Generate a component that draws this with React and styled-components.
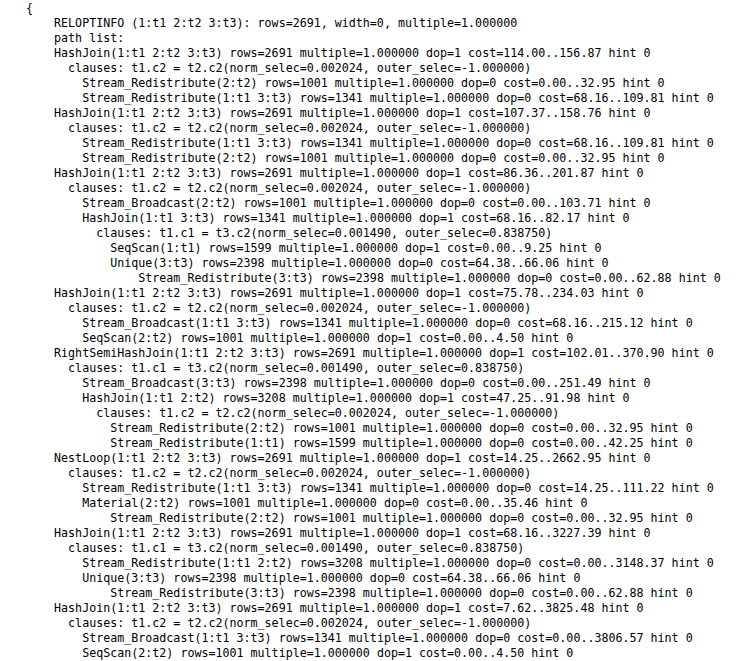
import React from "react";
import styled, { createGlobalStyle } from "styled-components";

const Global = createGlobalStyle`
  html, body {
    margin: 0;
    padding: 0;
    background: #ffffff;
  }
  body {
    width: 744px;
    height: 661px;
    overflow: hidden;
  }
`;

const Page = styled.main`
  box-sizing: border-box;
  width: 744px;
  height: 661px;
  overflow: hidden;
  background: #ffffff;
  padding: 1px 0 0 26px;
`;

const Listing = styled.div`
  display: flex;
  flex-direction: column;
  font-family: "DejaVu Sans Mono", "Liberation Mono", monospace;
  font-size: 11.67px;
  line-height: 15px;
  color: #000000;
  white-space: pre;
`;

const Line = styled.div`
  padding-left: ${(p) => p.$indent}ch;
`;

const J = () => `clauses: t1.c2 = t2.c2(norm_selec=0.002024, outer_selec=-1.000000)`;
const C13 = "clauses: t1.c1 = t3.c2(norm_selec=0.001490, outer_selec=0.838750)";

const lines = [
  [0, "{"],
  [4, "RELOPTINFO (1:t1 2:t2 3:t3): rows=2691, width=0, multiple=1.000000"],
  [4, "path list:"],
  [4, "HashJoin(1:t1 2:t2 3:t3) rows=2691 multiple=1.000000 dop=1 cost=114.00..156.87 hint 0"],
  [6, J()],
  [8, "Stream_Redistribute(2:t2) rows=1001 multiple=1.000000 dop=0 cost=0.00..32.95 hint 0"],
  [8, "Stream_Redistribute(1:t1 3:t3) rows=1341 multiple=1.000000 dop=0 cost=68.16..109.81 hint 0"],
  [4, "HashJoin(1:t1 2:t2 3:t3) rows=2691 multiple=1.000000 dop=1 cost=107.37..158.76 hint 0"],
  [6, J()],
  [8, "Stream_Redistribute(1:t1 3:t3) rows=1341 multiple=1.000000 dop=0 cost=68.16..109.81 hint 0"],
  [8, "Stream_Redistribute(2:t2) rows=1001 multiple=1.000000 dop=0 cost=0.00..32.95 hint 0"],
  [4, "HashJoin(1:t1 2:t2 3:t3) rows=2691 multiple=1.000000 dop=1 cost=86.36..201.87 hint 0"],
  [6, J()],
  [8, "Stream_Broadcast(2:t2) rows=1001 multiple=1.000000 dop=0 cost=0.00..103.71 hint 0"],
  [8, "HashJoin(1:t1 3:t3) rows=1341 multiple=1.000000 dop=1 cost=68.16..82.17 hint 0"],
  [10, C13],
  [12, "SeqScan(1:t1) rows=1599 multiple=1.000000 dop=1 cost=0.00..9.25 hint 0"],
  [12, "Unique(3:t3) rows=2398 multiple=1.000000 dop=0 cost=64.38..66.06 hint 0"],
  [16, "Stream_Redistribute(3:t3) rows=2398 multiple=1.000000 dop=0 cost=0.00..62.88 hint 0"],
  [4, "HashJoin(1:t1 2:t2 3:t3) rows=2691 multiple=1.000000 dop=1 cost=75.78..234.03 hint 0"],
  [6, J()],
  [8, "Stream_Broadcast(1:t1 3:t3) rows=1341 multiple=1.000000 dop=0 cost=68.16..215.12 hint 0"],
  [8, "SeqScan(2:t2) rows=1001 multiple=1.000000 dop=1 cost=0.00..4.50 hint 0"],
  [4, "RightSemiHashJoin(1:t1 2:t2 3:t3) rows=2691 multiple=1.000000 dop=1 cost=102.01..370.90 hint 0"],
  [6, C13],
  [8, "Stream_Broadcast(3:t3) rows=2398 multiple=1.000000 dop=0 cost=0.00..251.49 hint 0"],
  [8, "HashJoin(1:t1 2:t2) rows=3208 multiple=1.000000 dop=1 cost=47.25..91.98 hint 0"],
  [10, J()],
  [12, "Stream_Redistribute(2:t2) rows=1001 multiple=1.000000 dop=0 cost=0.00..32.95 hint 0"],
  [12, "Stream_Redistribute(1:t1) rows=1599 multiple=1.000000 dop=0 cost=0.00..42.25 hint 0"],
  [4, "NestLoop(1:t1 2:t2 3:t3) rows=2691 multiple=1.000000 dop=1 cost=14.25..2662.95 hint 0"],
  [6, J()],
  [8, "Stream_Redistribute(1:t1 3:t3) rows=1341 multiple=1.000000 dop=0 cost=14.25..111.22 hint 0"],
  [8, "Material(2:t2) rows=1001 multiple=1.000000 dop=0 cost=0.00..35.46 hint 0"],
  [12, "Stream_Redistribute(2:t2) rows=1001 multiple=1.000000 dop=0 cost=0.00..32.95 hint 0"],
  [4, "HashJoin(1:t1 2:t2 3:t3) rows=2691 multiple=1.000000 dop=1 cost=68.16..3227.39 hint 0"],
  [6, C13],
  [8, "Stream_Redistribute(1:t1 2:t2) rows=3208 multiple=1.000000 dop=0 cost=0.00..3148.37 hint 0"],
  [8, "Unique(3:t3) rows=2398 multiple=1.000000 dop=0 cost=64.38..66.06 hint 0"],
  [12, "Stream_Redistribute(3:t3) rows=2398 multiple=1.000000 dop=0 cost=0.00..62.88 hint 0"],
  [4, "HashJoin(1:t1 2:t2 3:t3) rows=2691 multiple=1.000000 dop=1 cost=7.62..3825.48 hint 0"],
  [6, J()],
  [8, "Stream_Broadcast(1:t1 3:t3) rows=1341 multiple=1.000000 dop=0 cost=0.00..3806.57 hint 0"],
  [8, "SeqScan(2:t2) rows=1001 multiple=1.000000 dop=1 cost=0.00..4.50 hint 0"],
];

export default function App() {
  return (
    <>
      <Global />
      <Page>
        <Listing>
          {lines.map(([indent, text], i) => (
            <Line key={i} $indent={indent}>
              {text}
            </Line>
          ))}
        </Listing>
      </Page>
    </>
  );
}
